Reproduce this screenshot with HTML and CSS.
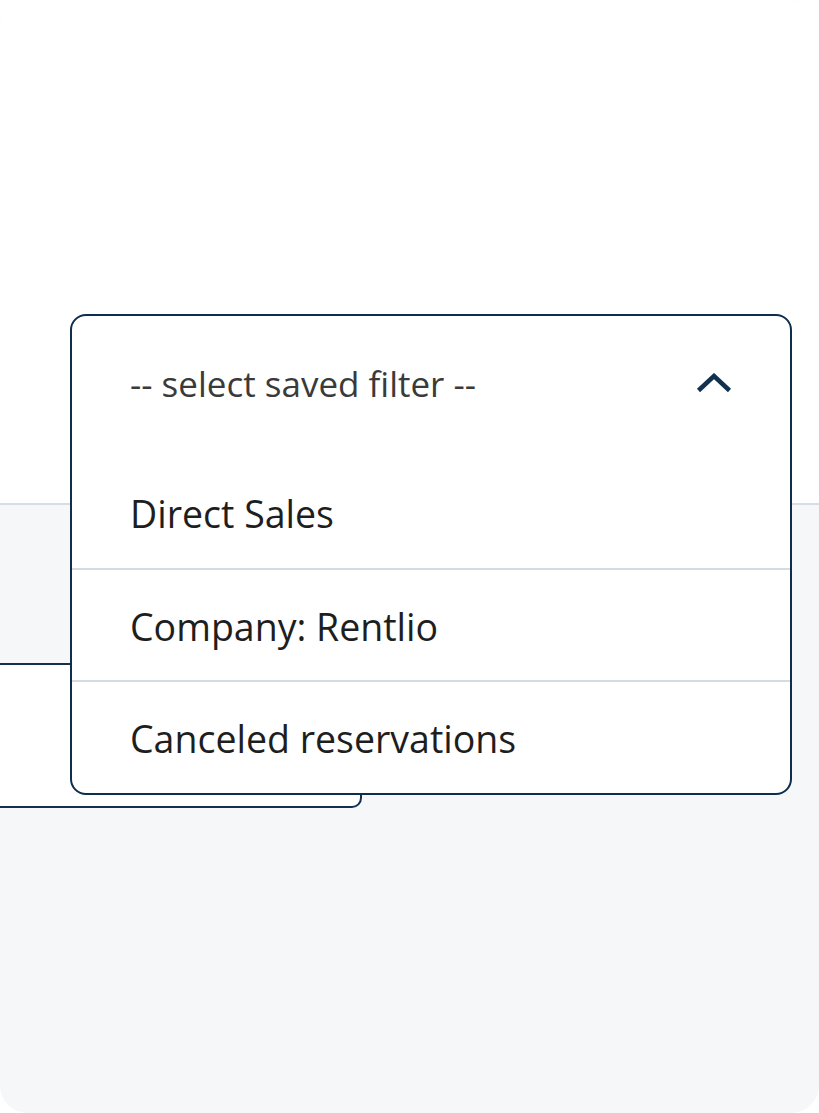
FILE: index.html
```html
<!DOCTYPE html>
<html lang="en">
<head>
<meta charset="utf-8">
<title>Saved filter</title>
<link rel="stylesheet" href="styles.css">
</head>
<body>
<div class="frame">
  <div class="top"></div>
  <div class="bottom">
    <div class="field"></div>
  </div>
  <div class="dropdown">
    <div class="dd-head">
      <span class="placeholder">-- select saved filter --</span>
      <svg class="chev" width="36" height="20" viewBox="0 0 36 20" aria-hidden="true">
        <path d="M2.5 17.5 L18 3 L33.5 17.5" fill="none" stroke="#12304f" stroke-width="4.5" stroke-linecap="butt" stroke-linejoin="miter"/>
      </svg>
    </div>
    <ul class="dd-list">
      <li class="dd-item">Direct Sales</li>
      <li class="dd-item">Company: Rentlio</li>
      <li class="dd-item">Canceled reservations</li>
    </ul>
  </div>
</div>
</body>
</html>
```
FILE: styles.css
```css
html, body {
  margin: 0;
  padding: 0;
  background: #ffffff;
}
.frame {
  position: relative;
  width: 819px;
  height: 1113px;
  border-radius: 28px;
  overflow: hidden;
  display: flex;
  flex-direction: column;
  background: #f6f7f9;
  font-family: "Open Sans", "Noto Sans", sans-serif;
}
.top {
  height: 503px;
  background: #ffffff;
  border-bottom: 2px solid #d6dde5;
  flex: none;
}
.bottom {
  flex: 1;
  background: #f6f7f9;
  padding-top: 158px;
}
.field {
  margin-left: -30px;
  width: 388px;
  height: 141px;
  background: #ffffff;
  border: 2px solid #12304f;
  border-radius: 10px;
}
.dropdown {
  position: absolute;
  left: 70px;
  top: 314px;
  width: 718px;
  height: 477px;
  border: 2px solid #0f2d4c;
  border-radius: 16px;
  background: #ffffff;
  display: flex;
  flex-direction: column;
  overflow: hidden;
}
.dd-head {
  height: 141px;
  flex: none;
  display: flex;
  align-items: center;
  justify-content: space-between;
  padding: 0 58px 0 58px;
}
.placeholder {
  font-size: 35px;
  color: #3a3a3a;
  margin-top: -6px;
}
.chev {
  display: block;
  margin-top: -8px;
}
.dd-list {
  list-style: none;
  margin: 0;
  padding: 0;
  flex: 1;
  display: flex;
  flex-direction: column;
}
.dd-item {
  flex: 1;
  display: flex;
  align-items: center;
  padding: 2px 58px 0;
  font-size: 37.5px;
  color: #1e1e1e;
  border-top: 2px solid #d3dbe3;
}
.dd-item:first-child {
  border-top: none;
}
```
